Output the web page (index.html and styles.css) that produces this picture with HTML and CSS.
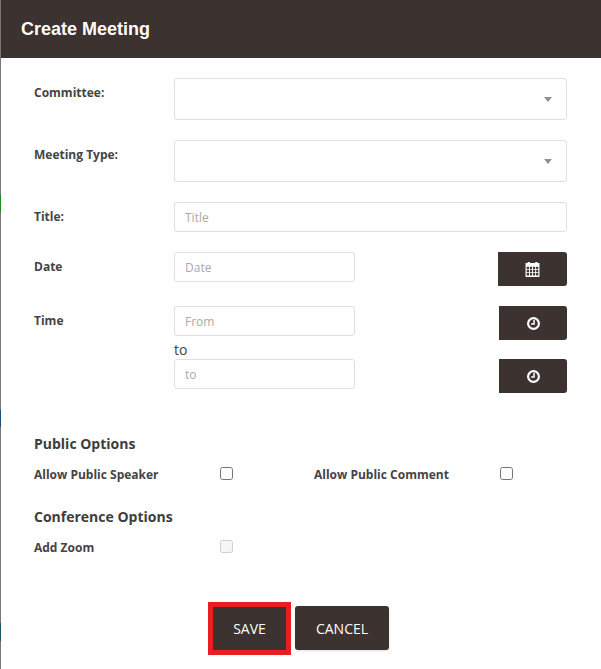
FILE: index.html
```html
<!DOCTYPE html>
<html lang="en">
<head>
<meta charset="utf-8">
<title>Create Meeting</title>
<link rel="stylesheet" href="styles.css">
</head>
<body>
<div class="edge"><i class="mark green"></i><i class="mark navy"></i><i class="mark teal"></i></div>
<main class="dialog">
  <header class="head"><h1>Create Meeting</h1></header>
  <form class="body">
    <div class="row r-select">
      <label class="lab">Committee:</label>
      <div class="select"><span class="caret"></span></div>
    </div>
    <div class="row r-select">
      <label class="lab">Meeting Type:</label>
      <div class="select"><span class="caret"></span></div>
    </div>
    <div class="row r-title">
      <label class="lab">Title:</label>
      <input class="field wide" placeholder="Title">
    </div>
    <div class="row r-date">
      <label class="lab">Date</label>
      <input class="field short" placeholder="Date">
      <button type="button" class="icon-btn date-btn" aria-label="Pick date">
        <svg width="15" height="15" viewBox="0 0 14 14"><path fill="#fff" fill-rule="evenodd" d="M2.500 0h2v1h5V0h2v1h2v13H.5V1h2zM1.600 4.500v2h2.100v-2zm3 0v2h2v-2zm2.900 0v2h2v-2zm2.900 0v2h2v-2zM1.600 7.300v2h2.100v-2zm3 0v2h2v-2zm2.900 0v2h2v-2zm2.900 0v2h2v-2zM1.600 10.100v2.500h2.100v-2.500zm3 0v2.500h2v-2.500zm2.900 0v2.500h2v-2.500zm2.900 0v2.500h2v-2.500z"/></svg>
      </button>
    </div>
    <div class="row r-time">
      <label class="lab">Time</label>
      <input class="field short" placeholder="From">
      <button type="button" class="icon-btn" aria-label="Pick start time">
        <svg width="13" height="13" viewBox="0 0 12 12"><circle cx="6" cy="6" r="5" fill="none" stroke="#fff" stroke-width="2"/><path fill="none" stroke="#fff" stroke-width="1.400" d="M6.500 2.800v3.700H3.800"/></svg>
      </button>
    </div>
    <div class="to-text">to</div>
    <div class="row r-to">
      <span class="lab"></span>
      <input class="field short" placeholder="to">
      <button type="button" class="icon-btn" aria-label="Pick end time">
        <svg width="13" height="13" viewBox="0 0 12 12"><circle cx="6" cy="6" r="5" fill="none" stroke="#fff" stroke-width="2"/><path fill="none" stroke="#fff" stroke-width="1.400" d="M6.500 2.800v3.700H3.800"/></svg>
      </button>
    </div>
    <h2 class="section s-public">Public Options</h2>
    <div class="checks">
      <label class="check-lab c1">Allow Public Speaker</label>
      <input type="checkbox" class="box">
      <label class="check-lab c2">Allow Public Comment</label>
      <input type="checkbox" class="box">
    </div>
    <h2 class="section s-conf">Conference Options</h2>
    <div class="checks">
      <label class="check-lab c1">Add Zoom</label>
      <input type="checkbox" class="box" disabled>
    </div>
    <div class="actions">
      <button type="button" class="btn save">SAVE</button>
      <button type="button" class="btn cancel">CANCEL</button>
    </div>
  </form>
</main>
</body>
</html>
```
FILE: styles.css
```css
* { box-sizing: border-box; }
html, body { margin: 0; height: 669px; overflow: hidden; background: #fff; }
body { position: relative; font-family: "Open Sans", sans-serif; color: #3d3d3d; }
.edge { position: absolute; left: 0; top: 0; width: 1px; height: 669px; background: #777; }
.mark { position: absolute; left: 0; width: 1px; }
.green { top: 195px; height: 17px; background: #1c8a1c; }
.navy { top: 410px; height: 17px; background: #1f4e79; }
.teal { top: 623px; height: 18px; background: #1f5566; }
.dialog { width: 601px; height: 669px; }
.head { height: 58px; background: #3c3230; padding: 0 0 0 21px; display: flex; align-items: center; }
h1 { margin: 0; font: bold 18px/1 "Liberation Sans", Arial, sans-serif; color: #fff; }
.body { display: block; padding: 20px 34px 0; }
.row { display: flex; align-items: flex-start; }
.lab { width: 140px; flex: none; font-size: 12px; font-weight: 700; line-height: 16px; color: #444; }
.r-select { height: 42px; margin-bottom: 20px; }
.r-select .lab { padding-top: 7px; }
.select { position: relative; width: 393px; height: 42px; border: 1px solid #e0e0e0; border-radius: 3px; background: #fff; }
.caret { position: absolute; right: 14px; top: 18px; border-left: 4px solid transparent; border-right: 4px solid transparent; border-top: 5px solid #8a9296; }
.field { height: 30px; padding: 0 10px; border: 1px solid #e0e0e0; border-radius: 3px; font: 12px "Open Sans", sans-serif; color: #444; background: #fff; outline: 0; }
.field::placeholder { color: #aaa; opacity: 1; }
.wide { width: 393px; }
.short { width: 181px; }
.r-title { height: 30px; margin-bottom: 20px; }
.r-title .lab { padding-top: 7px; }
.r-date { height: 34px; margin-bottom: 20px; }
.r-date .lab { padding-top: 7px; }
.r-time { height: 34px; }
.r-time .lab { padding-top: 7px; }
.icon-btn { width: 68px; height: 34px; margin-left: 144px; padding: 0; border: 0; border-radius: 0 3px 3px 0; background: #3c3230; display: flex; align-items: center; justify-content: center; }
.date-btn { width: 69px; margin-left: 143px; }
.to-text { margin: 0 0 0 140px; font-size: 14px; line-height: 19px; height: 19px; color: #444; }
.r-to { height: 34px; }
.section { margin: 0; font-size: 14px; font-weight: 700; line-height: 19px; color: #3d3d3d; }
.s-public { margin-top: 41px; }
.s-conf { margin-top: 24px; }
.checks { display: flex; align-items: center; height: 16px; margin-top: 14px; }
.check-lab { font-size: 12px; font-weight: 700; line-height: 16px; color: #444; }
.c1 { width: 186px; flex: none; }
.c2 { width: 186px; flex: none; margin-left: 81px; }
.box { appearance: none; -webkit-appearance: none; flex: none; width: 13px; height: 13px; margin: 0 0 4px; border: 1px solid #767676; border-radius: 2.500px; background: #fff; }
.box:disabled { background: #f6f6f6; border-color: #cfcfcf; }
.actions { display: flex; justify-content: center; gap: 9px; margin: 50px 0 0 1px; align-items: flex-end; }
.btn { height: 44px; padding: 0; border: 0; border-radius: 3px; background: #3c3230; color: #fff; font: 14px "Open Sans", sans-serif; }
.cancel { width: 94px; box-shadow: 0 1px 3px rgba(0, 0, 0, .12); }
.save { width: 73px; height: 43px; border-radius: 0; outline: 5px solid #ed1c24; }
```
